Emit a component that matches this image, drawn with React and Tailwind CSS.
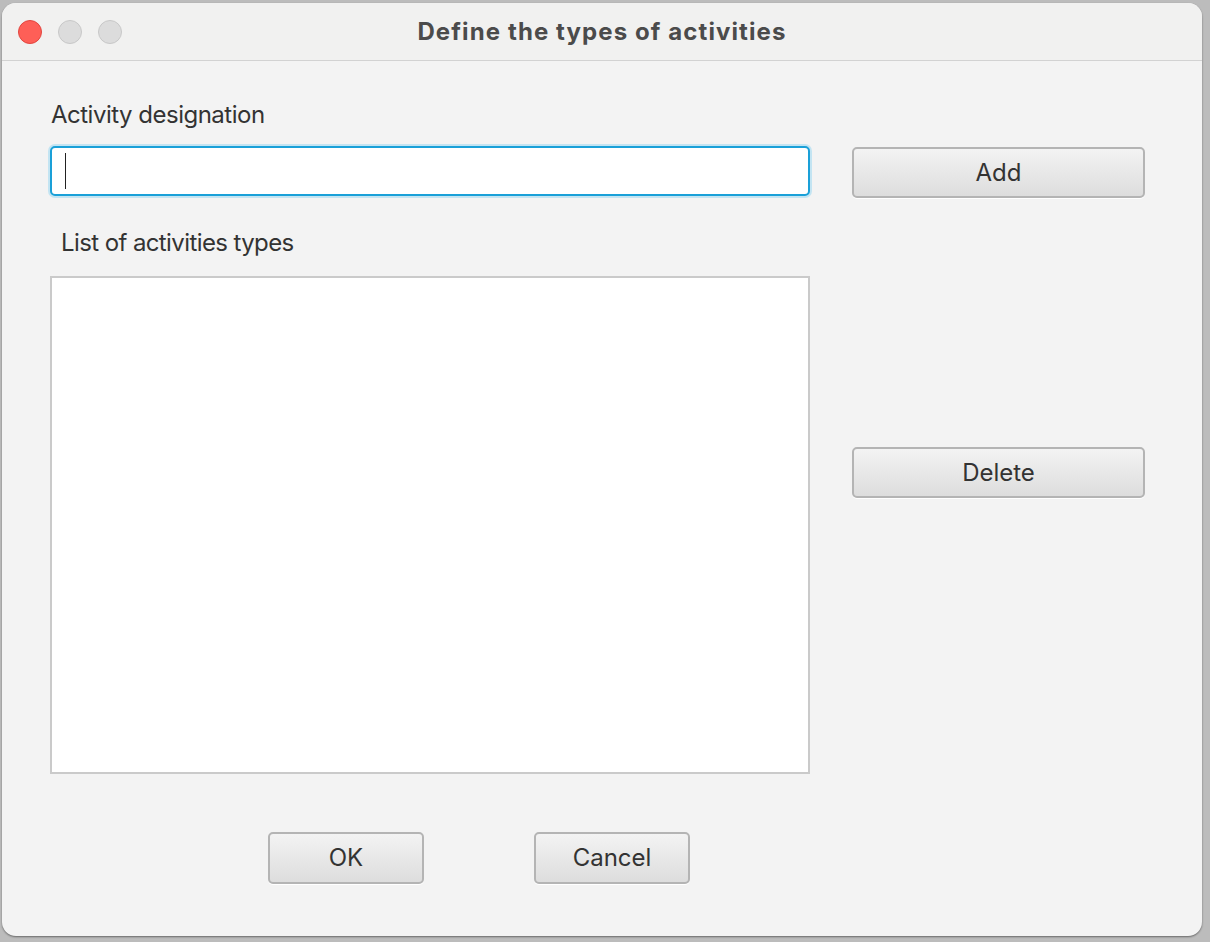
import React from "react";

const font = { fontFamily: "Inter, 'Noto Sans', 'Liberation Sans', sans-serif" };

const Button = ({ label, className = "" }) => (
  <button
    className={
      "flex items-center justify-center rounded-[5px] border-2 border-[#b4b4b4] bg-gradient-to-b from-[#f3f3f3] to-[#dddddd] text-[24px] text-[#333333] shadow-[0_1px_0_#ffffff] " +
      className
    }
  >
    {label}
  </button>
);

const App = () => {
  return (
    <div
      className="w-[1210px] h-[942px] bg-[#bcbcbc] pt-[3px] pl-[2px] overflow-hidden"
      style={font}
    >
      <div className="w-[1200px] h-[933px] rounded-[14px] bg-[#f3f3f3] shadow-[0_1px_2px_rgba(0,0,0,0.45)] overflow-hidden flex flex-col">
        {/* title bar */}
        <div className="relative h-[58px] shrink-0 bg-[#f1f1f0] border-b border-[#d2d2d2] flex items-center justify-center">
          <div className="absolute left-[16px] top-[17px] flex gap-[16px]">
            <span className="w-[24px] h-[24px] rounded-full bg-[#fe5f57] border border-[#e2463f]" />
            <span className="w-[24px] h-[24px] rounded-full bg-[#dcdcdc] border border-[#c8c8c8]" />
            <span className="w-[24px] h-[24px] rounded-full bg-[#dcdcdc] border border-[#c8c8c8]" />
          </div>
          <h1 className="text-[24px] font-bold text-[#4b4b4b] tracking-[1.1px]">
            Define the types of activities
          </h1>
        </div>

        {/* body */}
        <div className="flex-1 pl-[48px] flex flex-col">
          <div className="flex gap-[42px]">
            <div className="w-[760px] flex flex-col">
              <div className="mt-[39px] h-[30px] pl-[1px] text-[24px] leading-[30px] tracking-[-0.5px] text-[#333333]">
                Activity designation
              </div>
              <div className="mt-[16px] h-[50px] rounded-[5px] border-2 border-[#1aa0d8] bg-white shadow-[0_0_0_2px_#c3e4f2] flex items-center pl-[13px]">
                <span className="w-px h-[36px] bg-[#222222]" />
              </div>
              <div className="mt-[32px] h-[30px] pl-[11px] text-[24px] leading-[30px] tracking-[-0.6px] text-[#333333]">
                List of activities types
              </div>
              <div className="mt-[18px] h-[498px] bg-white border-2 border-[#cacaca]" />
            </div>
            <div className="w-[293px] flex flex-col">
              <Button label="Add" className="mt-[86px] h-[51px] w-full" />
              <Button label="Delete" className="mt-[249px] h-[51px] w-full" />
            </div>
          </div>

          <div className="mt-[58px] flex pl-[218px] gap-[110px]">
            <Button label="OK" className="w-[156px] h-[52px]" />
            <Button label="Cancel" className="w-[156px] h-[52px]" />
          </div>
        </div>
      </div>
    </div>
  );
};

export default App;
